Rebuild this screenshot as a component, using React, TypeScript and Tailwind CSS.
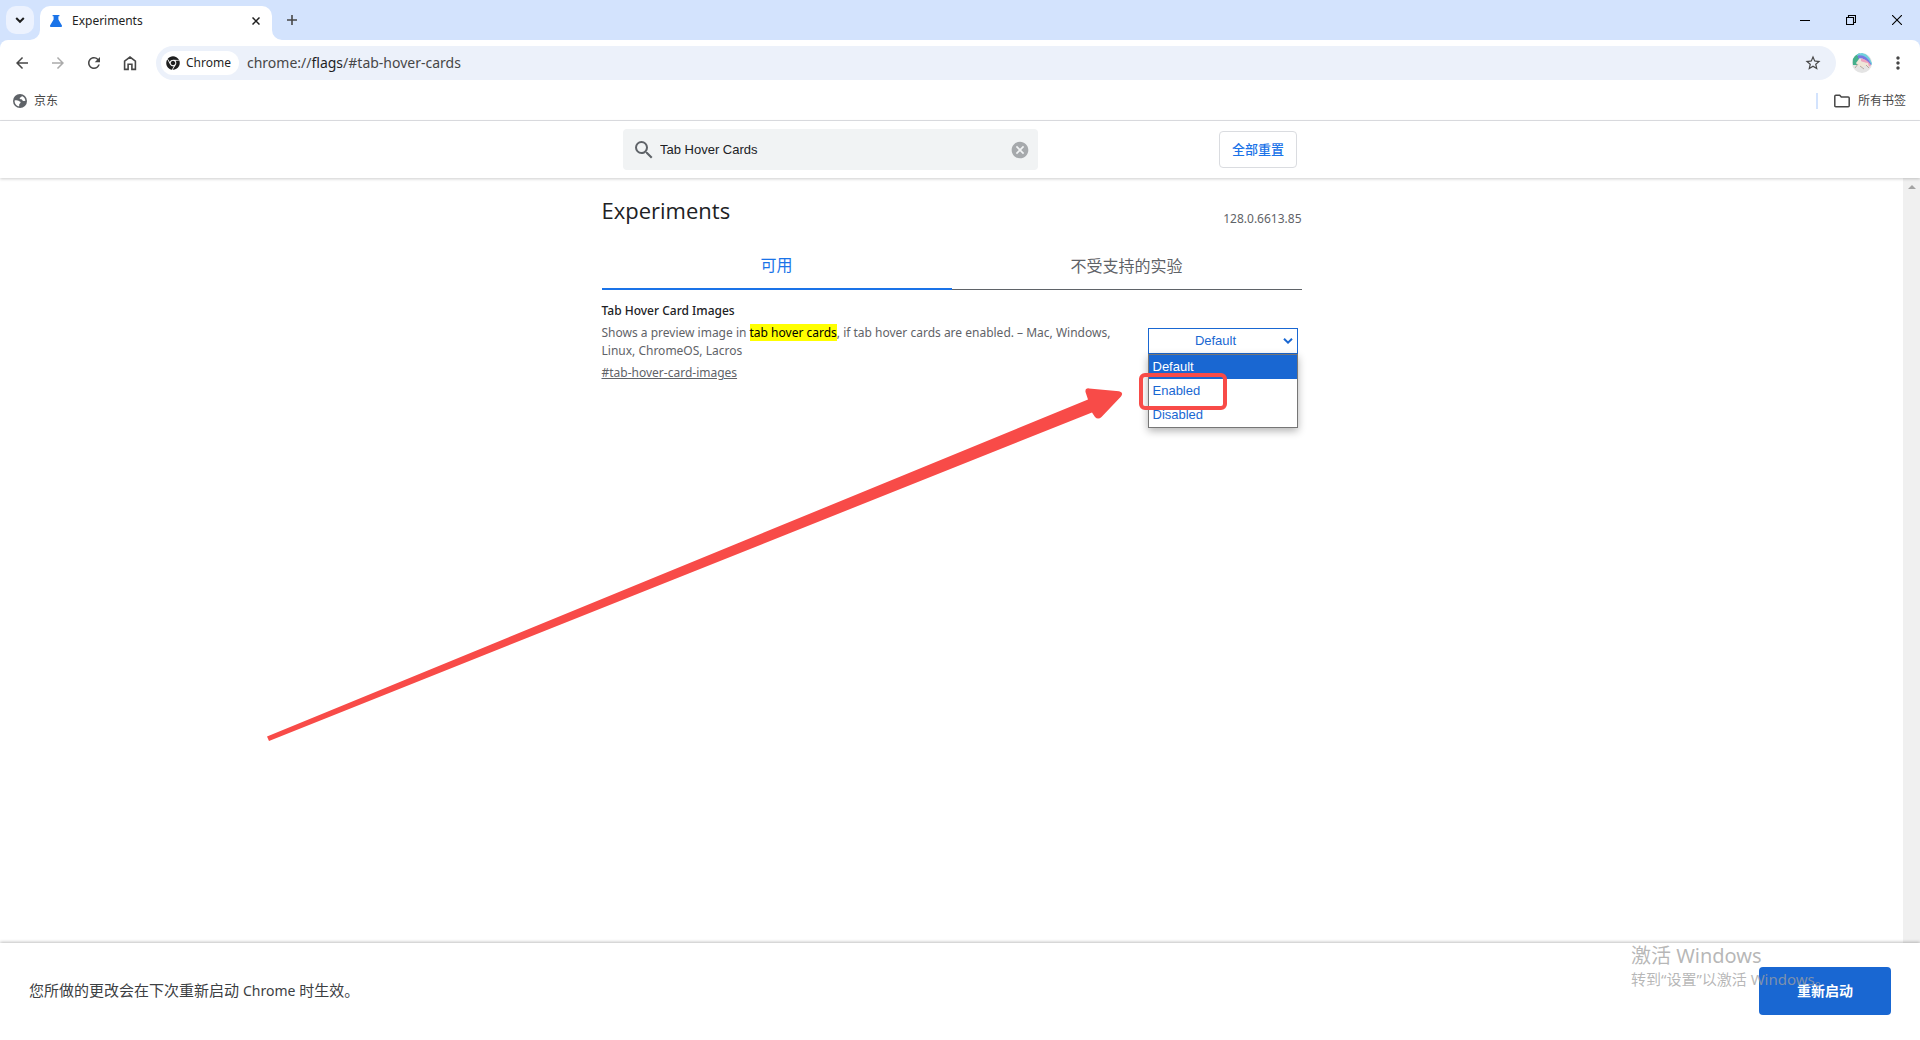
import { useState } from 'react';
import { FaChrome } from 'react-icons/fa';
import {
  MdArrowBack,
  MdArrowForward,
  MdCancel,
  MdMoreVert,
  MdRefresh,
  MdSearch,
  MdStarBorder,
} from 'react-icons/md';

const OPTIONS = ['Default', 'Enabled', 'Disabled'];

function FlaskIcon() {
  return (
    <svg viewBox="0 0 12 12" className="h-3 w-3" fill="#1a73e8" aria-hidden="true">
      <path d="M2.6 0h6.8v1.2H8.4V4.6l3.4 5.6c.5.9 0 1.8-1 1.8H1.2c-1 0-1.5-.9-1-1.8L3.6 4.6V1.2h-1z" />
    </svg>
  );
}

function HomeIcon() {
  return (
    <svg viewBox="0 0 16 16" className="h-4 w-4" fill="none" stroke="#474747" strokeWidth="1.6" aria-hidden="true">
      <path d="M2.6 6.2 8 2.1l5.4 4.1v8.2H9.9V9.3H6.1v5.1H2.6z" />
    </svg>
  );
}

function GlobeIcon() {
  return (
    <svg viewBox="0 0 14 14" className="h-3.5 w-3.5" aria-hidden="true">
      <circle cx="7" cy="7" r="7" fill="#5f6368" />
      <path
        d="M1.6 6.4C2.8 6 4.6 6 5.6 6.8 6.4 7.5 7.5 7.4 7.6 8.6 7.6 9.5 6.3 9.6 6.2 10.6V12.3C3.5 12 1.5 9.6 1.6 6.4zM8.8 1.9C8.9 3.2 7 3 6.7 4.1 6.5 5 7.3 5.3 8.2 5.3 9.4 5.3 9.2 6.9 10.4 7 11.4 7.1 11.7 6.6 12.4 6.8 12.3 4.5 10.9 2.6 8.8 1.9z"
        fill="#fff"
      />
    </svg>
  );
}

function FolderIcon() {
  return (
    <svg viewBox="0 0 16 14" className="h-3.5 w-4" fill="none" stroke="#474747" strokeWidth="1.5" aria-hidden="true">
      <path d="M.8 2.3Q.8 1.3 1.8 1.3H5.7L7.3 3H14.2Q15.2 3 15.2 4V11.7Q15.2 12.7 14.2 12.7H1.8Q.8 12.7.8 11.7z" />
    </svg>
  );
}

function Avatar() {
  return (
    <svg viewBox="0 0 20 20" className="h-5 w-5" aria-hidden="true">
      <defs>
        <clipPath id="avatar-clip">
          <circle cx="10" cy="10" r="10" />
        </clipPath>
      </defs>
      <g clipPath="url(#avatar-clip)">
        <rect width="20" height="20" fill="#e4e4e4" />
        <path d="M0 0h8L6 12H1z" fill="#45b08c" />
        <path d="M5 1.5C12 0 17 4 19 12" fill="none" stroke="#6fd0dc" strokeWidth="3" />
        <path d="M6 4c6-1 9 2 12 8" fill="none" stroke="#7a78e0" strokeWidth="3" />
        <path d="M9 7c4 0 6 2 9 6" fill="none" stroke="#eda3bd" strokeWidth="2.8" />
        <path d="M4 10 7 6l3 3 6 1 1 4-3-1-4 1-4-1z" fill="#efe6d8" />
        <path d="M6 11 3 15M8 13l4 3M14 12l3 3" stroke="#b8aaa0" strokeWidth="1" />
      </g>
    </svg>
  );
}

function TabStrip() {
  return (
    <header className="flex h-10 items-end bg-[#d3e3fd] pl-1.5">
      <button
        aria-label="Search tabs"
        className="mb-1.5 grid h-7 w-7 place-items-center rounded-[10px] bg-[#ecf2fe]"
      >
        <svg viewBox="0 0 10 10" className="h-2.5 w-2.5" fill="none" stroke="#1f1f1f" strokeWidth="2">
          <path d="M1.2 3 5 6.8 8.8 3" />
        </svg>
      </button>
      <div className="relative ml-1.5 flex h-[34px] w-58 items-center rounded-t-[10px] bg-white pr-2.5 pb-1 pl-2.5">
        <svg viewBox="0 0 10 10" className="absolute bottom-0 -left-2.5 h-2.5 w-2.5" fill="#fff">
          <path d="M10 0v10H0A10 10 0 0 0 10 0z" />
        </svg>
        <svg viewBox="0 0 10 10" className="absolute -right-2.5 bottom-0 h-2.5 w-2.5" fill="#fff">
          <path d="M0 0v10h10A10 10 0 0 1 0 0z" />
        </svg>
        <FlaskIcon />
        <span className="ml-2.5 flex-1 text-xs text-[#1f1f1f]">Experiments</span>
        <button aria-label="Close tab" className="grid h-3 w-3 place-items-center">
          <svg viewBox="0 0 8 8" className="h-2 w-2" stroke="#1f1f1f" strokeWidth="1.5">
            <path d="M.5.5l7 7M7.5.5l-7 7" />
          </svg>
        </button>
      </div>
      <button aria-label="New tab" className="mb-1.5 ml-1.5 grid h-7 w-7 place-items-center">
        <svg viewBox="0 0 10 10" className="h-2.5 w-2.5" stroke="#474747" strokeWidth="1.6">
          <path d="M5 0v10M0 5h10" />
        </svg>
      </button>
      <div className="ml-auto flex h-10 items-center text-black">
        <button aria-label="Minimize" className="grid h-10 w-[46px] place-items-center">
          <svg viewBox="0 0 10 10" className="h-2.5 w-2.5" stroke="currentColor">
            <path d="M0 5.5h10" />
          </svg>
        </button>
        <button aria-label="Restore" className="grid h-10 w-[46px] place-items-center">
          <svg viewBox="0 0 10 10" className="h-2.5 w-2.5" fill="none" stroke="currentColor" strokeWidth="1.1">
            <path d="M.5 2.5h7v7h-7zM2.5 2.5v-2h7v7h-2" />
          </svg>
        </button>
        <button aria-label="Close" className="grid h-10 w-[46px] place-items-center">
          <svg viewBox="0 0 10 10" className="h-2.5 w-2.5" stroke="currentColor" strokeWidth="1.1">
            <path d="M0 0l10 10M10 0L0 10" />
          </svg>
        </button>
      </div>
    </header>
  );
}

function Toolbar() {
  const [url, setUrl] = useState('chrome://flags/#tab-hover-cards');
  const [before, after] = url.split('flags');

  return (
    <div className="bg-[#d3e3fd]">
      <div className="flex h-[46px] items-center rounded-t-lg bg-white pr-3 pl-3 text-[#474747]">
        <div className="flex w-36 gap-4">
          <button aria-label="Back" className="grid h-5 w-5 place-items-center">
            <MdArrowBack className="h-[18px] w-[18px]" />
          </button>
          <button aria-label="Forward" className="grid h-5 w-5 place-items-center text-[#ababab]">
            <MdArrowForward className="h-[18px] w-[18px]" />
          </button>
          <button aria-label="Reload" className="grid h-5 w-5 place-items-center">
            <MdRefresh className="h-[18px] w-[18px]" />
          </button>
          <button aria-label="Home" className="grid h-5 w-5 place-items-center">
            <HomeIcon />
          </button>
        </div>
        <div className="flex h-[34px] flex-1 items-center rounded-full bg-[#ecf1fa] pr-3.5 pl-[5px]">
          <button className="flex h-6 items-center gap-1.5 rounded-full bg-white pr-2 pl-[5px] text-xs text-[#1f1f1f]">
            <FaChrome className="h-3.5 w-3.5" />
            Chrome
          </button>
          <div className="relative ml-2 flex-1 text-sm">
            <input
              aria-label="Address"
              value={url}
              onChange={(e) => setUrl(e.target.value)}
              className="w-full bg-transparent text-transparent caret-black outline-none"
            />
            <div aria-hidden="true" className="pointer-events-none absolute inset-0">
              {before}
              <span className="text-[#1f1f1f]">flags</span>
              {after}
            </div>
          </div>
          <button aria-label="Bookmark this tab">
            <MdStarBorder className="h-[18px] w-[18px]" />
          </button>
        </div>
        <button aria-label="Profile" className="ml-4">
          <Avatar />
        </button>
        <button aria-label="Menu" className="ml-4">
          <MdMoreVert className="h-5 w-5" />
        </button>
      </div>
    </div>
  );
}

function BookmarksBar() {
  return (
    <nav className="flex h-[35px] items-center justify-between border-b border-[#dfe1e5] pr-3.5 pb-1 pl-[13px] text-xs text-[#474747]">
      <a href="#jd" className="flex items-center gap-[7px]">
        <GlobeIcon />
        京东
      </a>
      <button className="flex items-center gap-2">
        <span className="mr-2 h-4 w-0.5 bg-[#d3e3fd]" />
        <FolderIcon />
        所有书签
      </button>
    </nav>
  );
}

function SearchHeader() {
  const [query, setQuery] = useState('Tab Hover Cards');

  return (
    <div className="relative z-10 flex h-[57px] justify-center bg-white shadow-[0_1px_3px_rgba(0,0,0,0.2)]">
      <div className="flex w-full max-w-[674px] items-center justify-between">
        <div className="flex h-[41px] w-[415px] items-center rounded bg-[#f1f3f4] pr-2 pl-[9px]">
          <MdSearch className="h-6 w-6 text-[#5f6368]" />
          <input
            aria-label="Search flags"
            value={query}
            onChange={(e) => setQuery(e.target.value)}
            className="ml-1 min-w-0 flex-1 bg-transparent font-['Liberation_Sans',sans-serif] text-[13px] text-[#202124] outline-none"
          />
          <button aria-label="Clear search" onClick={() => setQuery('')}>
            <MdCancel className="h-5 w-5 text-[#a6a9ac]" />
          </button>
        </div>
        <button className="h-[37px] rounded border border-[#dadce0] px-3 text-[13px] font-medium text-[#1a73e8]">
          全部重置
        </button>
      </div>
    </div>
  );
}

function FlagSelect() {
  const [value, setValue] = useState('Default');

  return (
    <div className="relative w-[150px] font-['Liberation_Sans',sans-serif] text-[13px] text-[#1967d2]">
      <select
        aria-label="Tab Hover Card Images"
        value={value}
        onChange={(e) => setValue(e.target.value)}
        className="block h-[26px] w-full appearance-none border border-[#1967d2] bg-white pr-3.5 text-center outline-none [text-align-last:center]"
      >
        {OPTIONS.map((o) => (
          <option key={o}>{o}</option>
        ))}
      </select>
      <svg
        viewBox="0 0 10 6"
        className="pointer-events-none absolute top-2.5 right-[5px] h-1.5 w-2.5"
        fill="none"
        stroke="#1967d2"
        strokeWidth="2"
      >
        <path d="M1 .8 5 4.6 9 .8" />
      </svg>
      <ul
        role="listbox"
        aria-label="Options"
        className="absolute top-[26px] left-0 w-full border border-[#767676] bg-white shadow-[0_3px_8px_rgba(0,0,0,0.3)]"
      >
        {OPTIONS.map((o) => (
          <li
            key={o}
            role="option"
            aria-selected={o === value}
            onClick={() => setValue(o)}
            className={`h-6 pl-1 leading-6 ${o === value ? 'bg-[#1967d2] text-white' : ''}`}
          >
            {o}
          </li>
        ))}
      </ul>
      <div className="pointer-events-none absolute top-[45px] -left-[9px] h-[37px] w-[88px] rounded-md border-4 border-[#f84b48]" />
      <svg
        viewBox="0 0 862 356"
        className="pointer-events-none absolute top-[58px] right-[172px] h-[356px] w-[862px]"
        fill="#f84b48"
        aria-hidden="true"
      >
        <path d="M3 350.5 824 13.5 821.5 6Q821 2 825 2.4L855 5.2Q860 6.4 857 10.5L837.5 31Q834 34 831 31L828 26.5 5 355z" />
      </svg>
    </div>
  );
}

function Experiments() {
  return (
    <div className="flex flex-1">
      <main className="flex-1 px-4">
        <div className="mx-auto max-w-[700px]">
          <div className="flex items-start justify-between">
            <h1 className="mt-4 font-['Open_Sans',sans-serif] text-[22px] leading-8 text-[#202124]">Experiments</h1>
            <span className="mt-[33px] text-xs leading-[15px] text-[#5f6368]">128.0.6613.85</span>
          </div>
          <div role="tablist" className="mt-4 grid h-12 grid-cols-2 text-base">
            <button role="tab" aria-selected="true" className="border-b-2 border-[#1a73e8] text-[#1a73e8]">
              可用
            </button>
            <button role="tab" aria-selected="false" className="border-b border-[#5f6368] text-[#5f6368]">
              不受支持的实验
            </button>
          </div>
          <section className="flex justify-between pt-3 pr-1">
            <div className="w-[530px] text-xs leading-[18px] text-[#5f6368]">
              <h2 className="font-medium text-[#202124]">Tab Hover Card Images</h2>
              <p className="mt-1">
                Shows a preview image in <mark className="bg-[#ff0] text-black">tab hover cards</mark>, if tab
                hover cards are enabled. – Mac, Windows, Linux, ChromeOS, Lacros
              </p>
              <a href="#tab-hover-card-images" className="mt-1 inline-block underline">
                #tab-hover-card-images
              </a>
            </div>
            <div className="pt-[26px]">
              <FlagSelect />
            </div>
          </section>
        </div>
      </main>
      <div className="w-[17px] bg-[#f0f0f0] pt-[7px]">
        <svg viewBox="0 0 8 4" className="mx-auto h-1 w-2" fill="#a3a3a3">
          <path d="M0 4 4 0l4 4z" />
        </svg>
      </div>
    </div>
  );
}

function RestartBar() {
  return (
    <footer className="relative flex h-[97px] items-center justify-between bg-white px-[29px] pb-0.5 shadow-[0_-1px_3px_rgba(0,0,0,0.25)]">
      <p className="text-[15px] text-[#3c4043]">
        您所做的更改会在下次重新启动 <span className="text-sm">Chrome</span> 时生效。
      </p>
      <button className="h-12 w-[132px] rounded bg-[#1967d2] text-sm font-bold text-white">重新启动</button>
      <div className="pointer-events-none absolute top-0 right-[92px] w-[197px] whitespace-nowrap text-[#a0a0a0]/75">
        <p className="text-xl leading-[26px]">激活 Windows</p>
        <p className="text-[15px] leading-5">转到“设置”以激活 Windows。</p>
      </div>
    </footer>
  );
}

export default function App() {
  return (
    <div className="flex min-h-screen flex-col bg-white font-['Noto_Sans','Noto_Sans_CJK_SC',sans-serif]">
      <TabStrip />
      <Toolbar />
      <BookmarksBar />
      <SearchHeader />
      <Experiments />
      <RestartBar />
    </div>
  );
}
